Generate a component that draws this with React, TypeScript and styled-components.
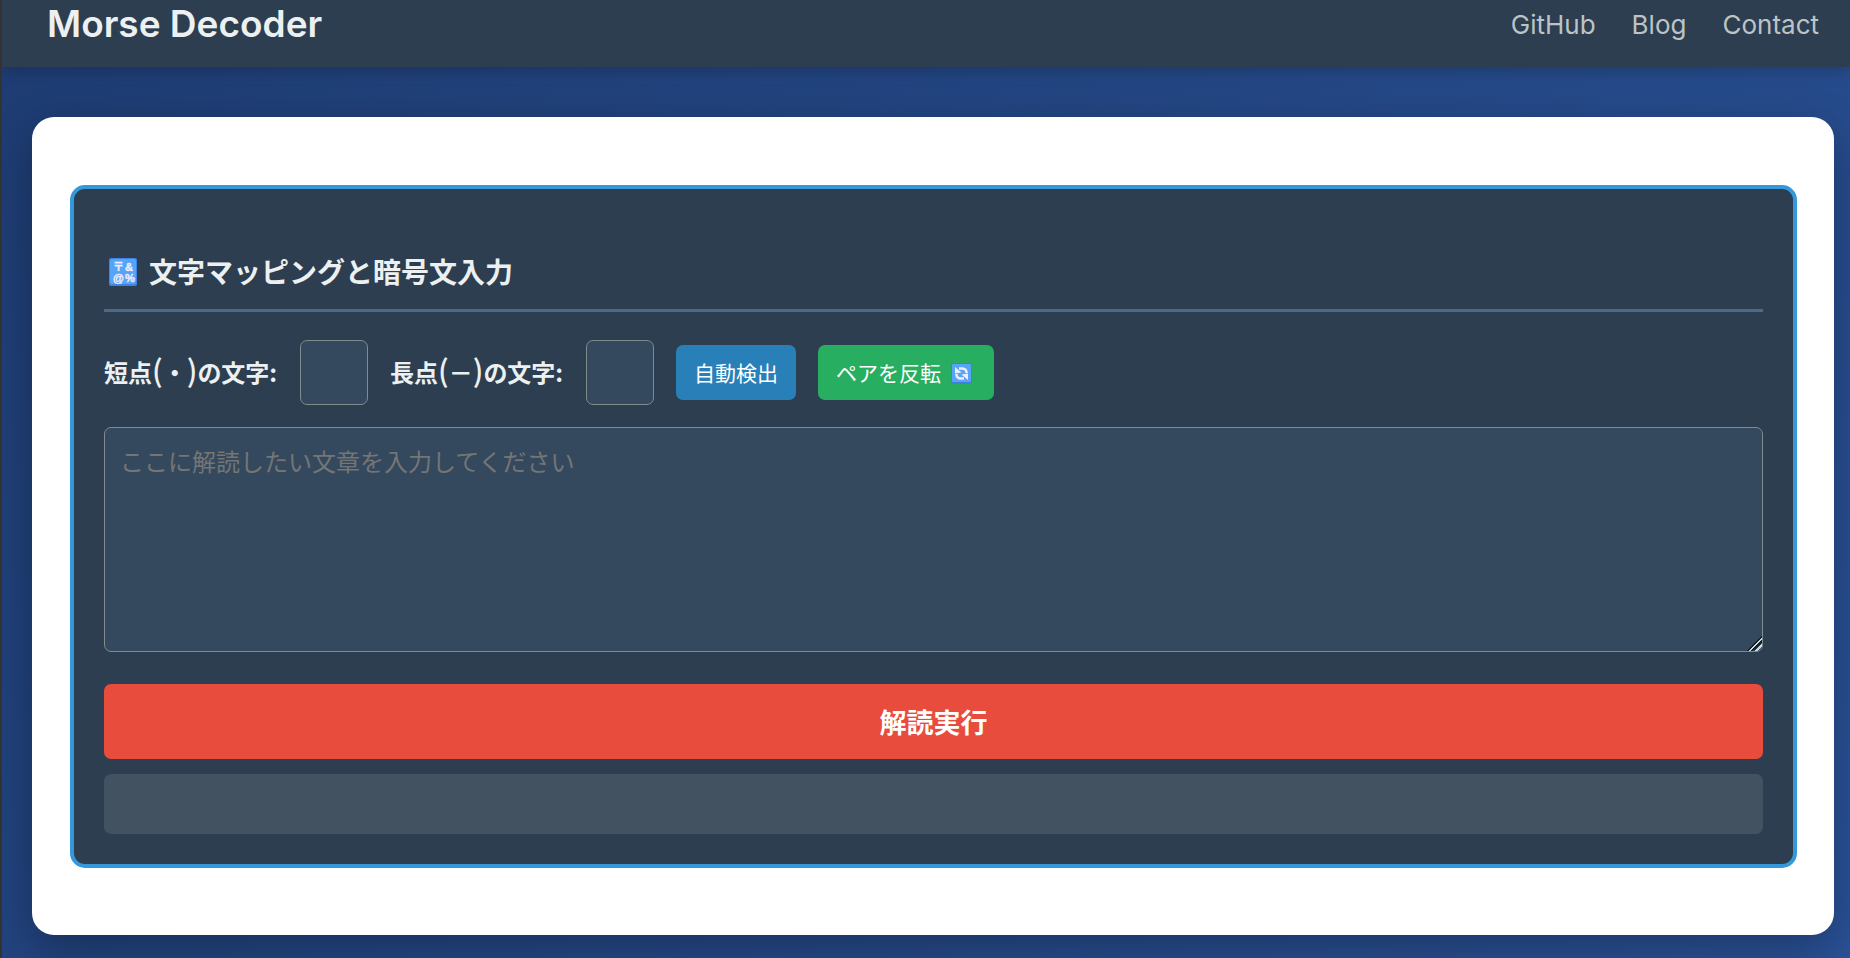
import React, { useState } from "react";
import styled, { createGlobalStyle } from "styled-components";

const GlobalStyle = createGlobalStyle`
  * { box-sizing: border-box; }
  html { background: #333333; }
  body {
    margin: 0;
    color: #ecf0f1;
    font-family: "Noto Sans CJK JP", sans-serif;
    font-size: 24px;
  }
  button, input, textarea { font-family: inherit; }
`;

const Page = styled.div`
  min-height: 100vh;
  margin-left: 2px;
  padding-bottom: 23px;
  overflow: hidden;
  background: linear-gradient(135deg, #1e3c72, #2a5298);
`;

const Header = styled.header`
  display: flex;
  justify-content: space-between;
  align-items: flex-start;
  height: 67px;
  padding: 0 31px 0 45px;
  background: #2c3e50;
  box-shadow: 0 4px 15px rgba(0, 0, 0, 0.2);
  font-family: Inter, sans-serif;
`;

const Title = styled.h1`
  margin: 0;
  font-size: 37px;
  line-height: 48px;
  font-weight: 600;
`;

const Nav = styled.nav`
  display: flex;
  gap: 36px;
`;

const NavLink = styled.a`
  color: #bdc3c7;
  font-size: 26px;
  line-height: 50px;
  text-decoration: none;
`;

const Card = styled.main`
  margin: 50px 16px 0 30px;
  padding: 68px 37px 67px 38px;
  border-radius: 22px;
  background: #ffffff;
  box-shadow: 0 15px 45px rgba(0, 0, 0, 0.3);
`;

const Panel = styled.section`
  display: flex;
  flex-direction: column;
  padding: 60px 30px 30px;
  border: 4px solid #3498db;
  border-radius: 15px;
  background: #2c3e50;
`;

const Heading = styled.h2`
  display: flex;
  align-items: center;
  gap: 12px;
  margin: 0 0 28px;
  padding: 0 5px 15px;
  border-bottom: 3px solid #4f6a88;
  font-size: 28px;
  line-height: 45px;
  font-weight: 700;
`;

const Controls = styled.div`
  display: flex;
  flex-wrap: wrap;
  align-items: center;
  gap: 22px;
  margin-bottom: 22px;
`;

const Label = styled.label`
  min-width: 174px;
  padding-bottom: 2px;
  font-weight: 700;
  line-height: 36px;
  white-space: nowrap;
`;

const Paren = styled.span`
  font-size: 30px;
  font-weight: 500;
  line-height: 1;
`;

const CharInput = styled.input`
  width: 68px;
  height: 65px;
  padding: 12px;
  border: 1px solid #7f8c8d;
  border-radius: 7px;
  background: #34495e;
  color: #ecf0f1;
  font-size: 24px;
  text-align: center;
`;

const SmallButton = styled.button<{ $color: string }>`
  display: flex;
  align-items: center;
  gap: 6px;
  height: 55px;
  padding: 0 18px 2px;
  border: 0;
  border-radius: 7px;
  background: ${(p) => p.$color};
  color: #ffffff;
  font-size: 21px;

  svg { margin: 4px 4px 0; }
`;

const CipherText = styled.textarea`
  width: 100%;
  height: 225px;
  margin-bottom: 32px;
  padding: 15px;
  border: 1px solid #7f8c8d;
  border-radius: 7px;
  background: #34495e;
  color: #ecf0f1;
  font-size: 24px;
  line-height: 36px;
  resize: vertical;
  &::placeholder { color: #757575; }
  &::-webkit-resizer {
    background: linear-gradient(
      135deg,
      transparent 48%, #14202c 48%, #14202c 55%,
      #cfd5da 55%, #cfd5da 63%, #14202c 63%, #14202c 70%,
      transparent 70%, transparent 76%, #cfd5da 76%, #cfd5da 84%, transparent 84%
    );
  }
`;

const RunButton = styled.button`
  height: 75px;
  border: 0;
  border-radius: 7px;
  background: #e74c3c;
  color: #ffffff;
  font-size: 27px;
  font-weight: 700;
`;

const Output = styled.output`
  min-height: 60px;
  margin-top: 15px;
  padding: 12px 16px;
  border-radius: 7px;
  background: #435261;
`;

const SymbolsIcon = () => (
  <svg width="28" height="28" viewBox="0 0 28 28" aria-hidden="true">
    <rect width="28" height="28" rx="2" fill="#3f83e6" />
    <rect x="1" y="1" width="26" height="25" rx="2" fill="#55a4f8" />
    <text fill="#f3ecfc" stroke="#f3ecfc" strokeWidth="0.4" fontFamily="'Liberation Sans', 'Noto Sans CJK JP', sans-serif" fontWeight="700" fontSize="11">
      <tspan x="4 16" y="13">〒&amp;</tspan>
      <tspan x="4 16" y="24">@%</tspan>
    </text>
  </svg>
);

const SwapIcon = () => (
  <svg width="21" height="21" viewBox="0 0 21 21" aria-hidden="true">
    <rect width="21" height="21" rx="2" fill="#3f7fe0" />
    <rect x="1" y="1" width="19" height="18" rx="1" fill="#58a5f8" />
    <g fill="none" stroke="#f3ecfc" strokeWidth="2.5">
      <path d="M8 5.5H11.500A4 4 0 0 1 15.500 9.500V10" />
      <path d="M13 15.500H9.500A4 4 0 0 1 5.500 11.500V11" />
    </g>
    <path d="M4 4V10.500L10.500 9.500Z M17 17V10.500L10.500 11.500Z" fill="#f3ecfc" />
  </svg>
);

export default function App() {
  const [dot, setDot] = useState("");
  const [dash, setDash] = useState("");
  const [text, setText] = useState("");
  const [result, setResult] = useState("");

  const detect = () => {
    const chars = Array.from(new Set(text.replace(/\s/g, "")));
    setDot(chars[0] ?? "");
    setDash(chars[1] ?? "");
  };
  const swap = () => {
    setDot(dash);
    setDash(dot);
  };
  const decode = () =>
    setResult(
      Array.from(text)
        .map((c) => (c === dot ? "・" : c === dash ? "－" : c))
        .join("")
    );

  return (
    <>
      <GlobalStyle />
      <Page>
        <Header>
          <Title>Morse Decoder</Title>
          <Nav>
            <NavLink href="#github">GitHub</NavLink>
            <NavLink href="#blog">Blog</NavLink>
            <NavLink href="#contact">Contact</NavLink>
          </Nav>
        </Header>
        <Card>
          <Panel>
            <Heading>
              <SymbolsIcon />
              文字マッピングと暗号文入力
            </Heading>
            <Controls>
              <Label htmlFor="dot">短点<Paren>(</Paren>・<Paren>)</Paren>の文字:</Label>
              <CharInput id="dot" maxLength={1} value={dot} onChange={(e) => setDot(e.target.value)} />
              <Label htmlFor="dash">長点<Paren>(</Paren>－<Paren>)</Paren>の文字:</Label>
              <CharInput id="dash" maxLength={1} value={dash} onChange={(e) => setDash(e.target.value)} />
              <SmallButton type="button" $color="#2980b9" onClick={detect}>自動検出</SmallButton>
              <SmallButton type="button" $color="#27ae60" onClick={swap}>
                ペアを反転
                <SwapIcon />
              </SmallButton>
            </Controls>
            <CipherText
              aria-label="暗号文"
              placeholder="ここに解読したい文章を入力してください"
              value={text}
              onChange={(e) => setText(e.target.value)}
            />
            <RunButton type="button" onClick={decode}>解読実行</RunButton>
            <Output htmlFor="dot dash">{result}</Output>
          </Panel>
        </Card>
      </Page>
    </>
  );
}
